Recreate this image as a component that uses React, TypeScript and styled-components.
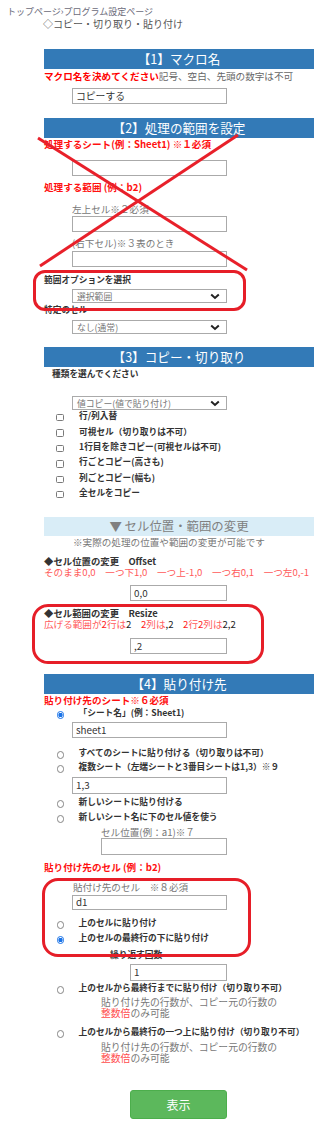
import styled, { createGlobalStyle } from "styled-components"

const Global = createGlobalStyle`
  body {
    margin: 0;
    background: #fff;
    font-family: "Noto Sans CJK JP", "Noto Sans", sans-serif;
    color: #333;
  }
  * { box-sizing: border-box; }
`

const Page = styled.div`
  width: 327px;
  padding-top: 6px;
  padding-bottom: 3px;
`

const Crumbs = styled.div`
  font-size: 9px;
  line-height: 12px;
  color: #6b6b7a;
  padding-left: 7px;
  white-space: nowrap;
`

const PageTitle = styled.div`
  font-size: 10px;
  line-height: 12px;
  color: #555;
  padding-left: 43px;
`

const Column = styled.div`
  position: relative;
  margin-left: 44px;
  width: 270px;
`

const Section = styled.div`
  position: relative;
`

const Bar = styled.div<{ $mt: number }>`
  margin-top: ${(p) => p.$mt}px;
  height: 20px;
  line-height: 20px;
  background: #337ab7;
  color: #fff;
  font-size: 12.6px;
  text-align: center;
  white-space: nowrap;
`

const LightBar = styled.div<{ $mt: number }>`
  margin-top: ${(p) => p.$mt}px;
  height: 19px;
  line-height: 19px;
  background: #d9edf7;
  color: #808080;
  font-size: 12.4px;
  text-align: center;
`

const Note = styled.div<{ $mt?: number }>`
  margin-top: ${(p) => p.$mt ?? 0}px;
  font-size: 9.6px;
  line-height: 12px;
  color: #666;
  white-space: nowrap;
`

const Strong = styled.span`
  color: #ff0000;
  font-weight: bold;
`

const RedHeading = styled.div<{ $mt?: number }>`
  margin-top: ${(p) => p.$mt ?? 0}px;
  font-size: 9.6px;
  line-height: 12px;
  font-weight: bold;
  color: #ff1010;
  white-space: nowrap;
`

const Caption = styled.div<{ $mt?: number; $indent: number }>`
  margin-top: ${(p) => p.$mt ?? 0}px;
  padding-left: ${(p) => p.$indent}px;
  font-size: 9.6px;
  line-height: 12px;
  color: #777;
  white-space: nowrap;
`

const FieldLabel = styled.div<{ $mt?: number; $indent?: number; $size?: number }>`
  margin-top: ${(p) => p.$mt ?? 0}px;
  padding-left: ${(p) => p.$indent ?? 0}px;
  font-size: ${(p) => p.$size ?? 8.7}px;
  line-height: 12px;
  font-weight: bold;
  color: #333;
  white-space: nowrap;
`

const Hint = styled.div<{ $mt?: number }>`
  margin-top: ${(p) => p.$mt ?? 0}px;
  font-size: 9.6px;
  line-height: 11px;
  color: #ff5a5a;
  white-space: pre;
`

const Hot = styled.span`
  color: #ff1a1a;
`

const Val = styled.span`
  color: #222;
`

const Field = styled.input<{ $mt?: number; $indent?: number; $w?: number; $h?: number }>`
  display: block;
  margin: ${(p) => p.$mt ?? 0}px 0 0 ${(p) => p.$indent ?? 28}px;
  width: ${(p) => p.$w ?? 155}px;
  height: ${(p) => p.$h ?? 16}px;
  border: 1px solid #aaa;
  padding: 0 3px;
  font-family: inherit;
  font-size: 9.8px;
  color: #333;
  background: #fff;
  outline: none;
`

const SelectBox = styled.div<{ $mt?: number }>`
  margin: ${(p) => p.$mt ?? 0}px 0 0 28px;
  width: 155px;
  height: 14px;
  border: 1px solid #aaa;
  padding: 0 6px 0 4px;
  display: flex;
  align-items: center;
  justify-content: space-between;
  font-size: 8.8px;
  color: #777;
`

const Chevron = () => (
  <svg width="10" height="7" viewBox="0 0 10 7">
    <path d="M1.2 1.5 L5 5 L8.8 1.5" fill="none" stroke="#222" strokeWidth="2" />
  </svg>
)

const CheckList = styled.div<{ $mt?: number }>`
  margin-top: ${(p) => p.$mt ?? 0}px;
  display: flex;
  flex-direction: column;
`

const CheckRow = styled.div`
  height: 15.4px;
  display: flex;
  align-items: center;
  font-size: 8.7px;
  font-weight: bold;
  color: #333;
  white-space: nowrap;
`

const Box = styled.span`
  flex: none;
  width: 7.5px;
  height: 7.5px;
  margin: 4px 15.5px 0 12px;
  border: 1px solid #7a7a7a;
  border-radius: 1.5px;
  background: #fff;
`

const RadioRow = styled.div<{ $mt?: number; $h?: number }>`
  margin-top: ${(p) => p.$mt ?? 0}px;
  height: ${(p) => p.$h ?? 14}px;
  display: flex;
  align-items: center;
  font-size: 8.7px;
  font-weight: bold;
  color: #333;
  white-space: nowrap;
`

const Dot = styled.span<{ $on?: boolean }>`
  flex: none;
  width: 7.5px;
  height: 7.5px;
  margin: 4px 14.5px 0 12.5px;
  border-radius: 50%;
  border: 1px solid ${(p) => (p.$on ? "#1a73e8" : "#858585")};
  background: ${(p) =>
    p.$on ? "radial-gradient(circle, #1a73e8 0 1.9px, #fff 2.3px)" : "#fff"};
`

const Marked = styled.div<{ $l: number; $t: number; $w: number; $h: number; $r: number }>`
  position: relative;
  &::after {
    content: "";
    position: absolute;
    left: ${(p) => p.$l}px;
    top: ${(p) => p.$t}px;
    width: ${(p) => p.$w}px;
    height: ${(p) => p.$h}px;
    border: 3px solid #e61e28;
    border-radius: ${(p) => p.$r}px;
    pointer-events: none;
  }
`

const Cross = styled.svg`
  position: absolute;
  left: 0;
  top: 0;
  overflow: visible;
  pointer-events: none;
`

const Explain = styled.div<{ $mt?: number }>`
  margin-top: ${(p) => p.$mt ?? 0}px;
  padding-left: 57px;
  font-size: 9.8px;
  line-height: 11.5px;
  color: #777;
  white-space: nowrap;
`

const Pink = styled.span`
  color: #ff4d4d;
`

const ShowButton = styled.button<{ $mt: number }>`
  display: block;
  margin: ${(p) => p.$mt}px 0 0 86px;
  width: 97px;
  height: 29px;
  border: 1px solid #4cae4c;
  border-radius: 3px;
  background: #5cb85c;
  color: #fff;
  font-family: inherit;
  font-size: 12px;
`

const checks = [
  "行/列入替",
  "可視セル（切り取りは不可）",
  "1行目を除きコピー(可視セルは不可)",
  "行ごとコピー(高さも)",
  "列ごとコピー(幅も)",
  "全セルをコピー",
]

export default function App() {
  return (
    <Page>
      <Global />
      <Crumbs>トップページ›プログラム設定ページ</Crumbs>
      <PageTitle>◇コピー・切り取り・貼り付け</PageTitle>

      <Column>
        <Bar $mt={19}>【1】マクロ名</Bar>
        <Note $mt={1}>
          <Strong>マクロ名を決めてください</Strong>記号、空白、先頭の数字は不可
        </Note>
        <Field $mt={6} defaultValue="コピーする" />

        <Section>
          <Bar $mt={14}>【2】処理の範囲を設定</Bar>
          <RedHeading>処理するシート(例：Sheet1) ※１必須</RedHeading>
          <Field $mt={10} />
          <RedHeading $mt={5}>処理する範囲 (例：b2)</RedHeading>
          <Caption $mt={10} $indent={28}>左上セル※２必須</Caption>
          <Field $mt={1} />
          <Caption $mt={5} $indent={28}>(右下セル)※３表のとき</Caption>
          <Field $mt={2} />
          <Cross width="270" height="160">
            <line x1="-6" y1="20" x2="203" y2="152" stroke="#e8202a" strokeWidth="3" />
            <line x1="194" y1="17" x2="-4" y2="148" stroke="#e8202a" strokeWidth="3" />
          </Cross>
        </Section>
        <Marked $l={-11} $t={-4} $w={207} $h={35} $r={12}>
          <FieldLabel $mt={7}>範囲オプションを選択</FieldLabel>
          <SelectBox $mt={3}>
            選択範囲
            <Chevron />
          </SelectBox>
        </Marked>
        <FieldLabel $mt={1}>特定のセル</FieldLabel>
        <SelectBox $mt={4}>
          なし(通常)
          <Chevron />
        </SelectBox>

        <Bar $mt={13}>【3】コピー・切り取り</Bar>
        <FieldLabel $mt={1} $indent={8}>種類を選んでください</FieldLabel>
        <SelectBox $mt={16}>
          値コピー(値で貼り付け)
          <Chevron />
        </SelectBox>
        <CheckList $mt={-2}>
          {checks.map((c) => (
            <CheckRow key={c}>
              <Box />
              {c}
            </CheckRow>
          ))}
        </CheckList>

        <LightBar $mt={16.6}>▼ セル位置・範囲の変更</LightBar>
        <Caption $indent={29}>※実際の処理の位置や範囲の変更が可能です</Caption>
        <FieldLabel $mt={7} $size={9.4}>◆セル位置の変更　Offset</FieldLabel>
        <Hint>{"そのまま0,0　一つ下1,0　一つ上-1,0　一つ右0,1　一つ左0,-1"}</Hint>
        <Field $mt={7} $indent={86} $w={97} defaultValue="0,0" />
        <Marked $l={-12} $t={-3} $w={226} $h={54} $r={16}>
          <FieldLabel $mt={6} $size={9.4}>◆セル範囲の変更　Resize</FieldLabel>
          <Hint>
            {"広げる範囲が"}
            <Hot>2</Hot>
            {"行は"}
            <Val>2</Val>
            {"　"}
            <Hot>2</Hot>
            {"列は"}
            <Val>,2</Val>
            {"　"}
            <Hot>2</Hot>
            {"行"}
            <Hot>2</Hot>
            {"列は"}
            <Val>2,2</Val>
          </Hint>
          <Field $mt={8} $indent={86} $w={97} defaultValue=",2" />
        </Marked>

        <Bar $mt={20}>【4】貼り付け先</Bar>
        <RedHeading>貼り付け先のシート※６必須</RedHeading>
        <RadioRow>
          <Dot $on />
          「シート名」(例：Sheet1)
        </RadioRow>
        <Field $mt={2} defaultValue="sheet1" />
        <RadioRow $mt={8}>
          <Dot />
          すべてのシートに貼り付ける（切り取りは不可）
        </RadioRow>
        <RadioRow>
          <Dot />
          複数シート（左端シートと3番目シートは1,3）※９
        </RadioRow>
        <Field $mt={3} $h={17} defaultValue="1,3" />
        <RadioRow $mt={1}>
          <Dot />
          新しいシートに貼り付ける
        </RadioRow>
        <RadioRow $mt={1}>
          <Dot />
          新しいシート名に下のセル値を使う
        </RadioRow>
        <Caption $mt={2} $indent={57}>セル位置(例：a1)※７</Caption>
        <Field $indent={57} $w={126} $h={17} />
        <RedHeading $mt={6}>貼り付け先のセル (例：b2)</RedHeading>
        <Marked $l={-2} $t={-3} $w={203} $h={73} $r={16}>
          <Caption $mt={8} $indent={29}>貼付け先のセル　※８必須</Caption>
          <Field $mt={2} $h={15} defaultValue="d1" />
          <RadioRow $mt={6}>
            <Dot />
            上のセルに貼り付け
          </RadioRow>
          <RadioRow $mt={1}>
            <Dot $on />
            上のセルの最終行の下に貼り付け
          </RadioRow>
        </Marked>
        <FieldLabel $mt={4} $indent={66}>繰り返す回数</FieldLabel>
        <Field $mt={3} $indent={86} $w={97} $h={17} defaultValue="1" />
        <RadioRow>
          <Dot />
          上のセルから最終行までに貼り付け（切り取り不可）
        </RadioRow>
        <Explain $mt={2}>
          貼り付け先の行数が、コピー元の行数の
          <br />
          <Pink>整数倍</Pink>のみ可能
        </Explain>
        <RadioRow $mt={5}>
          <Dot />
          上のセルから最終行の一つ上に貼り付け（切り取り不可）
        </RadioRow>
        <Explain $mt={3}>
          貼り付け先の行数が、コピー元の行数の
          <br />
          <Pink>整数倍</Pink>のみ可能
        </Explain>
        <ShowButton $mt={25}>表示</ShowButton>
      </Column>
    </Page>
  )
}
